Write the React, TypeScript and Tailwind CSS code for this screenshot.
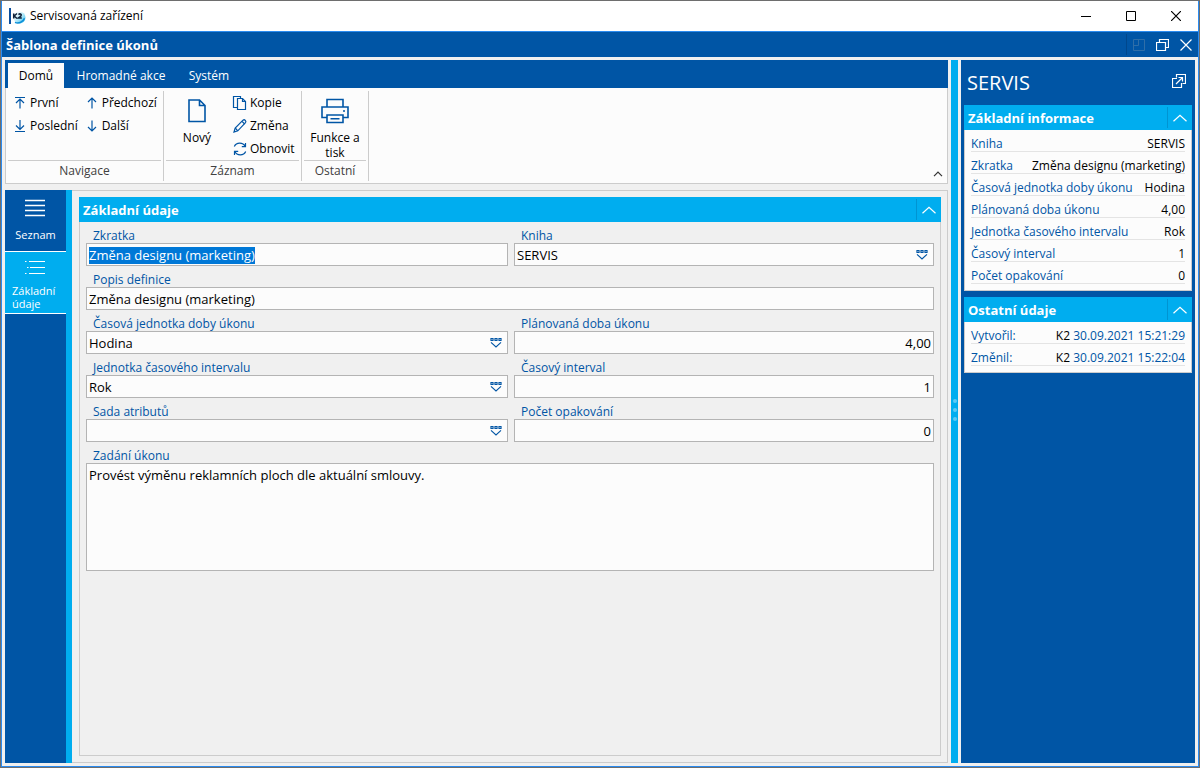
import { useEffect, useRef, type ReactNode } from "react";

type IconProps = { className?: string; children: ReactNode; box?: string };

function Icon({ className = "h-4 w-4", box = "0 0 16 16", children }: IconProps) {
  return (
    <svg viewBox={box} className={className} fill="none" stroke="currentColor" aria-hidden="true">
      {children}
    </svg>
  );
}

const CollapseIcon = () => (
  <Icon box="0 0 14 8" className="h-2 w-3.5">
    <path d="M.5 7.300 7 1.200l6.500 6.100" strokeWidth="1.200" />
  </Icon>
);

function Logo() {
  return (
    <svg viewBox="0 0 17 16" className="h-4 w-[17px] shrink-0" aria-hidden="true">
      <defs>
        <linearGradient id="globe" x1="0" y1="0" x2="1" y2="1">
          <stop offset="0.3" stopColor="#e8f8fd" />
          <stop offset="0.65" stopColor="#8fdcf5" />
          <stop offset="1" stopColor="#0fa5e0" />
        </linearGradient>
      </defs>
      <circle cx="10.500" cy="9.500" r="6" fill="url(#globe)" />
      <path d="M6 14.300c3 1.500 8 .5 9.500-4" stroke="#0b8fd8" strokeWidth="1.500" fill="none" />
      <rect x="0" y="0" width="2" height="16" fill="#0b4f9e" />
      <path d="M4.700 5.500v5M8 5.500 5.200 8 8 10.500M9.500 6.600q1.300-1.300 2.500-.3T9.500 9.900h3.300" stroke="#10243c" strokeWidth="1.500" fill="none" />
    </svg>
  );
}

function TitleBar() {
  const button = "flex h-[30px] w-[45px] items-center justify-center";
  return (
    <header className="flex h-[30px] shrink-0 items-center bg-white pl-[7px] text-black">
      <Logo />
      <h1 className="ml-1 flex-1 text-xs">Servisovaná zařízení</h1>
      <button aria-label="Minimalizovat" className={button}>
        <Icon box="0 0 10 10" className="h-2.5 w-2.5"><path d="M0 5.500h10" /></Icon>
      </button>
      <button aria-label="Maximalizovat" className={button}>
        <Icon box="0 0 10 10" className="h-2.5 w-2.5"><path d="M.5.5h9v9h-9z" /></Icon>
      </button>
      <button aria-label="Zavřít" className={button}>
        <Icon box="0 0 10 10" className="h-2.5 w-2.5"><path d="m0 0 10 10M10 0 0 10" strokeWidth="1.200" /></Icon>
      </button>
    </header>
  );
}

function FormBar() {
  return (
    <div className="flex h-[26px] shrink-0 items-center border-t border-[#2a8bf0] bg-[#0055a5] pl-1 text-white">
      <h2 className="flex-1 pt-0.5 text-[13px] font-bold">Šablona definice úkonů</h2>
      <div className="flex h-[21px] items-center gap-[11px] border-l border-[#00478c] pr-1.5 pl-1.5">
        <button aria-label="Ukotvit" disabled className="text-[#2f6ea8]">
          <Icon box="0 0 12 12" className="h-3 w-3"><path d="M.5.5h11v11H.5zM.5 6.500h5v-6" /></Icon>
        </button>
        <button aria-label="Obnovit okno">
          <Icon box="0 0 13 12" className="h-3 w-[13px]"><path d="M.5 3.500h9v8h-9zM3.500 3V.5h9v8H10" strokeWidth="1.200" /></Icon>
        </button>
        <button aria-label="Zavřít formulář">
          <Icon box="0 0 12 12" className="h-3 w-3"><path d="m.5.5 11 11M11.500.5l-11 11" strokeWidth="1.200" /></Icon>
        </button>
      </div>
    </div>
  );
}

const small: Record<string, ReactNode> = {
  first: <path d="M3 2.500h10M8 13.500V4M4 8l4-4 4 4" />,
  last: <path d="M3 13.500h10M8 2v9.500M4 7.500l4 4 4-4" />,
  prev: <path d="M8 13.500V3M4 7l4-4 4 4" />,
  next: <path d="M8 2.500V13M4 9l4 4 4-4" />,
  copy: (
    <>
      <path d="M5 12.500H1.500v-11h7v1.500" />
      <path d="M5.500 3.500h5l3 3v8h-8z" />
      <path d="M10.500 3.500v3h3" />
    </>
  ),
  edit: (
    <>
      <path d="M2 14l1.200-4L11 2.200q1.200-1 2.300.2t.2 2.300L5.800 12.800z" />
      <path d="m10 3.300 2.700 2.700M3.200 10l2.600 2.800" />
    </>
  ),
  refresh: (
    <>
      <path d="M2.300 5.500C4.300 1 11 1 13.300 5.500M13.500 2v3.700H9.800" />
      <path d="M13.700 10.500C11.700 15 5 15 2.700 10.500M2.500 14v-3.700h3.700" />
    </>
  ),
};

function ToolButton({ icon, children }: { icon: string; children: ReactNode }) {
  return (
    <button className="flex h-[23px] items-center gap-0.5 whitespace-nowrap">
      <Icon className="h-4 w-4 text-[#0055a5]"><g strokeWidth="1.200">{small[icon]}</g></Icon>
      {children}
    </button>
  );
}

function RibbonGroup({ title, children, className }: { title: string; children: ReactNode; className: string }) {
  return (
    <section className={`flex flex-col border-r border-[#cccccc] px-0.5 ${className}`}>
      <div className="flex h-[69px] items-start">{children}</div>
      <h3 className="border-t border-[#cccccc] pt-0.5 text-center text-xs text-[#404040]">{title}</h3>
    </section>
  );
}

function Ribbon() {
  return (
    <div className="shrink-0">
      <nav role="tablist" className="flex h-7 items-end bg-[#0055a5] pl-[3px] text-xs text-white">
        <button role="tab" aria-selected="true" className="h-[25px] w-14 bg-[#fcfcfc] text-black">Domů</button>
        <button role="tab" aria-selected="false" className="h-[25px] w-[114px]">Hromadné akce</button>
        <button role="tab" aria-selected="false" className="h-[25px] w-[62px]">Systém</button>
      </nav>
      <div className="flex h-24 border border-t-0 border-[#cccccc] bg-[#fcfcfc] pt-[3px] pb-0.5 text-xs text-black">
        <RibbonGroup title="Navigace" className="w-[158px]">
          <div className="flex gap-1.5 pl-1">
            <div>
              <ToolButton icon="first">První</ToolButton>
              <ToolButton icon="last">Poslední</ToolButton>
            </div>
            <div>
              <ToolButton icon="prev">Předchozí</ToolButton>
              <ToolButton icon="next">Další</ToolButton>
            </div>
          </div>
        </RibbonGroup>
        <RibbonGroup title="Záznam" className="w-[138px]">
          <button className="flex w-[62px] flex-col items-center gap-[7px] pt-2">
            <Icon box="0 0 18 24" className="h-6 w-[18px] text-[#0055a5]">
              <path d="M1 1h10.500L17 6.500V22.500H1zM11.500 1v5.500H17" strokeWidth="1.600" />
            </Icon>
            Nový
          </button>
          <div className="pl-1">
            <ToolButton icon="copy">Kopie</ToolButton>
            <ToolButton icon="edit">Změna</ToolButton>
            <ToolButton icon="refresh">Obnovit</ToolButton>
          </div>
        </RibbonGroup>
        <RibbonGroup title="Ostatní" className="w-[67px]">
          <button className="flex w-full flex-col items-center gap-1.5 pt-[7px] leading-[15px]">
            <Icon box="0 0 28 26" className="h-[26px] w-7 text-[#0055a5]">
              <g strokeWidth="1.600">
                <path d="M6 9V1.500h16V9M6 19.500H1V9h26v10.500h-5" />
                <path d="M6 17h16v7.500H6zM9.500 20.700h9" />
                <path d="M22 13h2" />
              </g>
            </Icon>
            <span>Funkce a tisk</span>
          </button>
        </RibbonGroup>
        <button aria-label="Sbalit pás karet" className="mr-1 mb-1 ml-auto self-end text-[#333333]">
          <Icon box="0 0 10 6" className="h-1.5 w-2.5"><path d="m1 5.200 4-4 4 4" strokeWidth="1.200" /></Icon>
        </button>
      </div>
    </div>
  );
}

function SideNav() {
  const item = "flex flex-col items-center border-b border-white text-[11px] leading-[13px] text-white";
  return (
    <nav className="flex w-[67px] shrink-0 flex-col border-r-[6px] border-[#00adef] bg-[#0055a5]">
      <a href="#seznam" className={`${item} h-[62px] pt-[9px]`}>
        <Icon box="0 0 20 18" className="mr-px h-[18px] w-5"><path d="M0 1.500h20M0 6.500h20M0 11.500h20M0 16.500h20" strokeWidth="1.400" /></Icon>
        <span className="mt-[11px]">Seznam</span>
      </a>
      <a href="#zakladni-udaje" aria-current="page" className={`${item} h-[62px] bg-[#00adef] pt-2`}>
        <Icon box="0 0 20 16" className="mr-px h-4 w-5"><path d="M0 1.500h1.500M4 1.500h16M2 7.500h1.500M5 7.500h15M0 13.500h1.500M4 13.500h16" strokeWidth="1.200" /></Icon>
        <span className="mt-2 w-[47px]">Základní údaje</span>
      </a>
    </nav>
  );
}

function PanelHeader({ title }: { title: string }) {
  return (
    <div className="flex h-[25px] shrink-0 items-center justify-between bg-[#00adef] pl-1 text-white">
      <h3 className="pt-0.5 text-[13px] font-bold">{title}</h3>
      <button aria-label={`Sbalit: ${title}`} className="flex h-[21px] w-[25px] items-center justify-center border-l border-[#0094d2]">
        <CollapseIcon />
      </button>
    </div>
  );
}

type FieldProps = { id: string; label: string; value: string; lookup?: boolean; numeric?: boolean; wide?: boolean; selected?: boolean };

const labelClass = "block h-[21px] pt-1.5 pl-[7px] text-xs leading-4 text-[#0055a5]";

function Field({ id, label, value, lookup, numeric, wide, selected }: FieldProps) {
  const ref = useRef<HTMLInputElement>(null);
  useEffect(() => {
    if (selected) {
      ref.current?.focus();
      ref.current?.select();
    }
  }, [selected]);
  return (
    <div className={wide ? "col-span-2" : ""}>
      <label htmlFor={id} className={labelClass}>{label}</label>
      <div className="flex h-[23px] items-start border border-[#b4b4b4] bg-[#fcfcfc] px-0.5 pt-[3px]">
        <input
          ref={ref}
          id={id}
          defaultValue={value}
          className={`h-[17px] w-full min-w-0 flex-1 bg-transparent text-[13px] leading-[17px] text-black outline-none selection:bg-[#0078d7] selection:text-white ${numeric ? "text-right" : ""}`}
        />
        {lookup && (
          <button aria-label={`Vybrat: ${label}`} className="mt-0.5 mr-[3px] text-[#0055a5]">
            <Icon box="0 0 12 11" className="h-[11px] w-3">
              <path d="M1 1.500h2v2H1zM5 1.500h2v2H5zM9 1.500h2v2H9z" strokeWidth="1.200" />
              <path d="M1 5.300 6 10l5-4.700" strokeWidth="1.100" />
            </Icon>
          </button>
        )}
      </div>
    </div>
  );
}

function DetailForm() {
  return (
    <main className="flex min-w-0 flex-1 flex-col border-t border-r border-b border-[#cccccc] p-1.5 pl-[7px]">
      <section className="flex flex-1 flex-col">
        <PanelHeader title="Základní údaje" />
        <form className="grid flex-1 grid-cols-[422fr_420fr] content-start gap-x-1.5 border border-t-0 border-[#cccccc] px-1.5">
          <Field id="zkratka" label="Zkratka" value="Změna designu (marketing)" selected />
          <Field id="kniha" label="Kniha" value="SERVIS" lookup />
          <Field id="popis" label="Popis definice" value="Změna designu (marketing)" wide />
          <Field id="jednotka-doby" label="Časová jednotka doby úkonu" value="Hodina" lookup />
          <Field id="doba" label="Plánovaná doba úkonu" value="4,00" numeric />
          <Field id="jednotka-intervalu" label="Jednotka časového intervalu" value="Rok" lookup />
          <Field id="interval" label="Časový interval" value="1" numeric />
          <Field id="sada" label="Sada atributů" value="" lookup />
          <Field id="pocet" label="Počet opakování" value="0" numeric />
          <div className="col-span-2">
            <label htmlFor="zadani" className={labelClass}>Zadání úkonu</label>
            <textarea
              id="zadani"
              defaultValue="Provést výměnu reklamních ploch dle aktuální smlouvy."
              className="block h-[108px] w-full resize-none border border-[#b4b4b4] bg-[#fcfcfc] px-0.5 py-[3px] text-[13px] leading-[17px] text-black outline-none"
            />
          </div>
        </form>
      </section>
    </main>
  );
}

function InfoCard({ title, rows }: { title: string; rows: [string, ReactNode][] }) {
  return (
    <section>
      <PanelHeader title={title} />
      <dl className="border border-t-0 border-[#cccccc] bg-[#fcfcfc] px-1.5 pb-1.5 text-xs">
        {rows.map(([name, value]) => (
          <div key={name} className="flex h-[22px] items-center justify-between border-b border-[#e4e4e4] pt-1.5 whitespace-nowrap">
            <dt className="text-[#0055a5]">{name}</dt>
            <dd className="text-black">{value}</dd>
          </div>
        ))}
      </dl>
    </section>
  );
}

function Stamp({ user, time }: { user: string; time: string }) {
  return (
    <>
      {user} <time className="text-[#0055a5]">{time}</time>
    </>
  );
}

function Preview() {
  return (
    <aside className="flex w-[234px] shrink-0 flex-col gap-1.5 bg-[#0055a5] px-[3px]">
      <div className="-mb-1.5 flex h-[45px] items-center justify-between pr-1.5 pl-[3px] text-white">
        <h2 className="text-xl">SERVIS</h2>
        <button aria-label="Otevřít v novém okně" className="-mt-1">
          <Icon box="0 0 14 14" className="h-3.5 w-3.5">
            <path d="M4.500 3.500V.5h9v9h-3" strokeWidth="1.200" />
            <path d="M5 4.500H.5v9h9V9" strokeWidth="1.200" />
            <path d="m4 10 6.500-6.500M6.500 3.500h4v4" strokeWidth="1.200" />
          </Icon>
        </button>
      </div>
      <InfoCard
        title="Základní informace"
        rows={[
          ["Kniha", "SERVIS"],
          ["Zkratka", "Změna designu (marketing)"],
          ["Časová jednotka doby úkonu", "Hodina"],
          ["Plánovaná doba úkonu", "4,00"],
          ["Jednotka časového intervalu", "Rok"],
          ["Časový interval", "1"],
          ["Počet opakování", "0"],
        ]}
      />
      <InfoCard
        title="Ostatní údaje"
        rows={[
          ["Vytvořil:", <Stamp user="K2" time="30.09.2021 15:21:29" />],
          ["Změnil:", <Stamp user="K2" time="30.09.2021 15:22:04" />],
        ]}
      />
    </aside>
  );
}

export default function App() {
  return (
    <div className="h-screen border border-[#6e6e6e] font-['Open_Sans','Noto_Sans',sans-serif]">
      <div className="flex h-full flex-col border border-t-0 border-[#2a8bf0] bg-[#f0f0f0]">
        <TitleBar />
        <FormBar />
        <div className="flex min-h-0 flex-1 gap-[3px] p-[3px]">
          <div className="flex min-w-0 flex-1 flex-col gap-1.5">
            <Ribbon />
            <div className="flex min-h-0 flex-1">
              <SideNav />
              <DetailForm />
            </div>
          </div>
          <div role="separator" aria-orientation="vertical" className="flex w-[7px] shrink-0 flex-col items-center justify-center gap-[5px] bg-[#00adef] pb-1">
            <span className="h-1 w-1 rounded-full bg-[#5cc9f5]" />
            <span className="h-1 w-1 rounded-full bg-[#5cc9f5]" />
            <span className="h-1 w-1 rounded-full bg-[#5cc9f5]" />
          </div>
          <Preview />
        </div>
      </div>
    </div>
  );
}
